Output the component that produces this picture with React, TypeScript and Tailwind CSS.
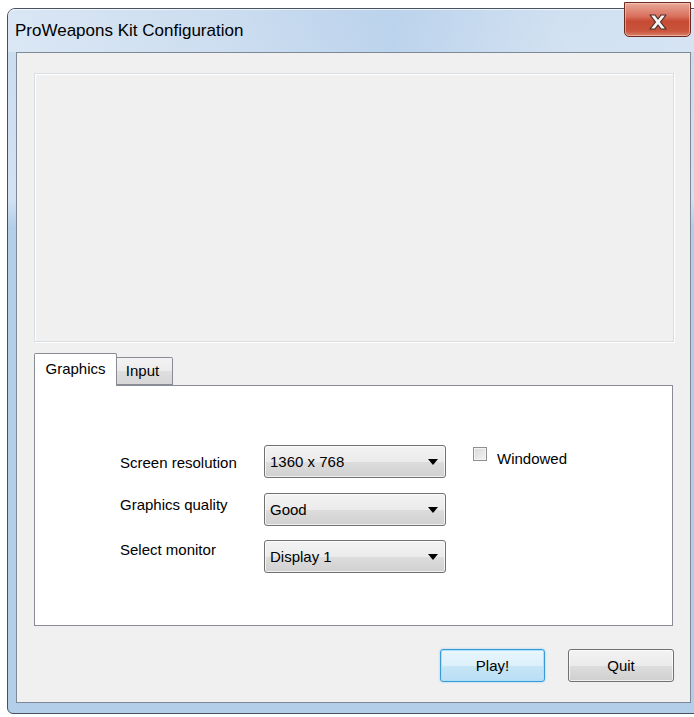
import React from "react";

function Combo({ value }: { value: string }) {
  return (
    <div className="w-[182px] h-[33px] rounded-[3px] border border-[#707070] bg-[linear-gradient(to_bottom,#f3f3f3_0%,#ebebeb_50%,#dddddd_51%,#d0d0d0_100%)] shadow-[inset_0_0_0_1px_rgba(255,255,255,0.7)] flex items-center justify-between pl-[5px] pr-[7px]">
      <span className="text-[15px] leading-[18px] text-black">{value}</span>
      <svg width="10" height="6" viewBox="0 0 10 6">
        <path d="M0 0 H10 L5 6 Z" fill="#000" />
      </svg>
    </div>
  );
}

function Row({
  label,
  value,
  labelPad,
  extra,
  className,
}: {
  label: string;
  value: string;
  labelPad: string;
  extra?: React.ReactNode;
  className?: string;
}) {
  return (
    <div className={"flex items-start " + (className ?? "")}>
      <div className={"w-[144px] text-[15px] leading-[20px] text-black " + labelPad}>{label}</div>
      <Combo value={value} />
      {extra}
    </div>
  );
}

export default function App() {
  return (
    <div className="w-[694px] h-[717px] bg-white overflow-hidden font-['Liberation_Sans',Arial,sans-serif]">
      {/* window frame */}
      <div className="relative ml-[7px] mt-[8px] w-[700px] h-[706px] rounded-t-[8px] rounded-bl-[6px] border border-[#48525e] bg-[linear-gradient(to_bottom,#c9dbef_0%,#d3e2f2_27%,#b4cee9_31%,#b3cee9_100%)] flex flex-col">
        {/* title bar */}
        <div className="h-[43px] rounded-t-[7px] pl-[7px] flex items-center bg-[linear-gradient(to_right,rgba(255,255,255,0.3)_0%,rgba(255,255,255,0.05)_30%,rgba(160,195,230,0.35)_55%,rgba(255,255,255,0.15)_80%,rgba(255,255,255,0.2)_100%)] shadow-[inset_0_1px_0_rgba(255,255,255,0.7)]">
          <span className="text-[17px] leading-[20px] text-black">ProWeapons Kit Configuration</span>
        </div>

        {/* close button */}
        <div className="absolute top-[-7px] left-[616px] w-[67px] h-[35px] rounded-b-[5px] border border-[#6b2a22] bg-[linear-gradient(to_bottom,#e9a898_0%,#d9715e_40%,#c74a33_55%,#c9553c_85%,#d9816a_100%)] shadow-[inset_0_0_0_1px_rgba(255,220,210,0.5)] flex items-center justify-center pt-[4px]">
          <svg width="20" height="16" viewBox="0 0 20 16">
            <path
              d="M2 1 H7 L10 5 L13 1 H18 L12.5 8 L18 15 H13 L10 11 L7 15 H2 L7.5 8 Z"
              fill="#f4f4f4"
              stroke="#4b2a26"
              strokeWidth="1.2"
              strokeLinejoin="round"
            />
          </svg>
        </div>

        {/* client area */}
        <div className="ml-[8px] w-[675px] h-[651px] border border-[#7d8996] bg-[#f0f0f0] flex flex-col">
          {/* preview panel */}
          <div className="ml-[17px] mt-[20px] w-[640px] h-[269px] border border-[#d8dde2] shadow-[inset_1px_1px_0_#ffffff,1px_1px_0_#ffffff] bg-[#f0f0f0]" />

          {/* tabs */}
          <div className="ml-[17px] mt-[11px] w-[639px] flex flex-col">
            <div className="flex items-end h-[32px]">
              <div className="relative z-10 -mb-px w-[83px] h-[33px] border border-b-0 border-[#898c95] rounded-t-[2px] bg-white flex items-center justify-center pb-[3px]">
                <span className="text-[15px] leading-[18px] text-black">Graphics</span>
              </div>
              <div className="w-[56px] h-[28px] border border-l-0 border-[#898c95] rounded-tr-[2px] bg-[linear-gradient(to_bottom,#f3f3f3_0%,#ebebeb_50%,#dedede_51%,#d7d7d7_100%)] flex items-center justify-center pr-[4px]">
                <span className="text-[15px] leading-[18px] text-black">Input</span>
              </div>
            </div>
            <div className="h-[241px] border border-[#898c95] bg-white pl-[85px] pt-[59px]">
              <Row
                label="Screen resolution"
                value="1360 x 768"
                labelPad="pt-[8px]"
                extra={
                  <div className="ml-[27px] mt-[2px] flex items-start gap-[10px]">
                    <div className="w-[14px] h-[14px] border border-[#8f8f8f] bg-[linear-gradient(135deg,#d8d8d8_0%,#f4f4f4_100%)] shadow-[inset_0_0_0_1px_#f4f4f4]" />
                    <span className="text-[15px] leading-[18px] text-black mt-[3px]">Windowed</span>
                  </div>
                }
              />
              <Row className="mt-[15px]" label="Graphics quality" value="Good" labelPad="pt-[2px]" />
              <Row className="mt-[14px]" label="Select monitor" value="Display 1" labelPad="pt-0" />
            </div>
          </div>

          {/* dialog buttons */}
          <div className="mt-[23px] pr-[16px] flex justify-end gap-[23px]">
            <button className="w-[105px] h-[33px] rounded-[3px] border border-[#3a9ad6] bg-[linear-gradient(to_bottom,#eaf6fd_0%,#dcf0fb_50%,#c7e6f7_51%,#b9def4_100%)] shadow-[inset_0_0_0_1px_#aee0f9,0_0_2px_#7cc8f0] text-[15px] leading-[18px] text-black">
              Play!
            </button>
            <button className="w-[106px] h-[33px] rounded-[3px] border border-[#707070] bg-[linear-gradient(to_bottom,#f3f3f3_0%,#ebebeb_50%,#dddddd_51%,#cfcfcf_100%)] shadow-[inset_0_0_0_1px_rgba(255,255,255,0.7)] text-[15px] leading-[18px] text-black">
              Quit
            </button>
          </div>
        </div>
      </div>
    </div>
  );
}
